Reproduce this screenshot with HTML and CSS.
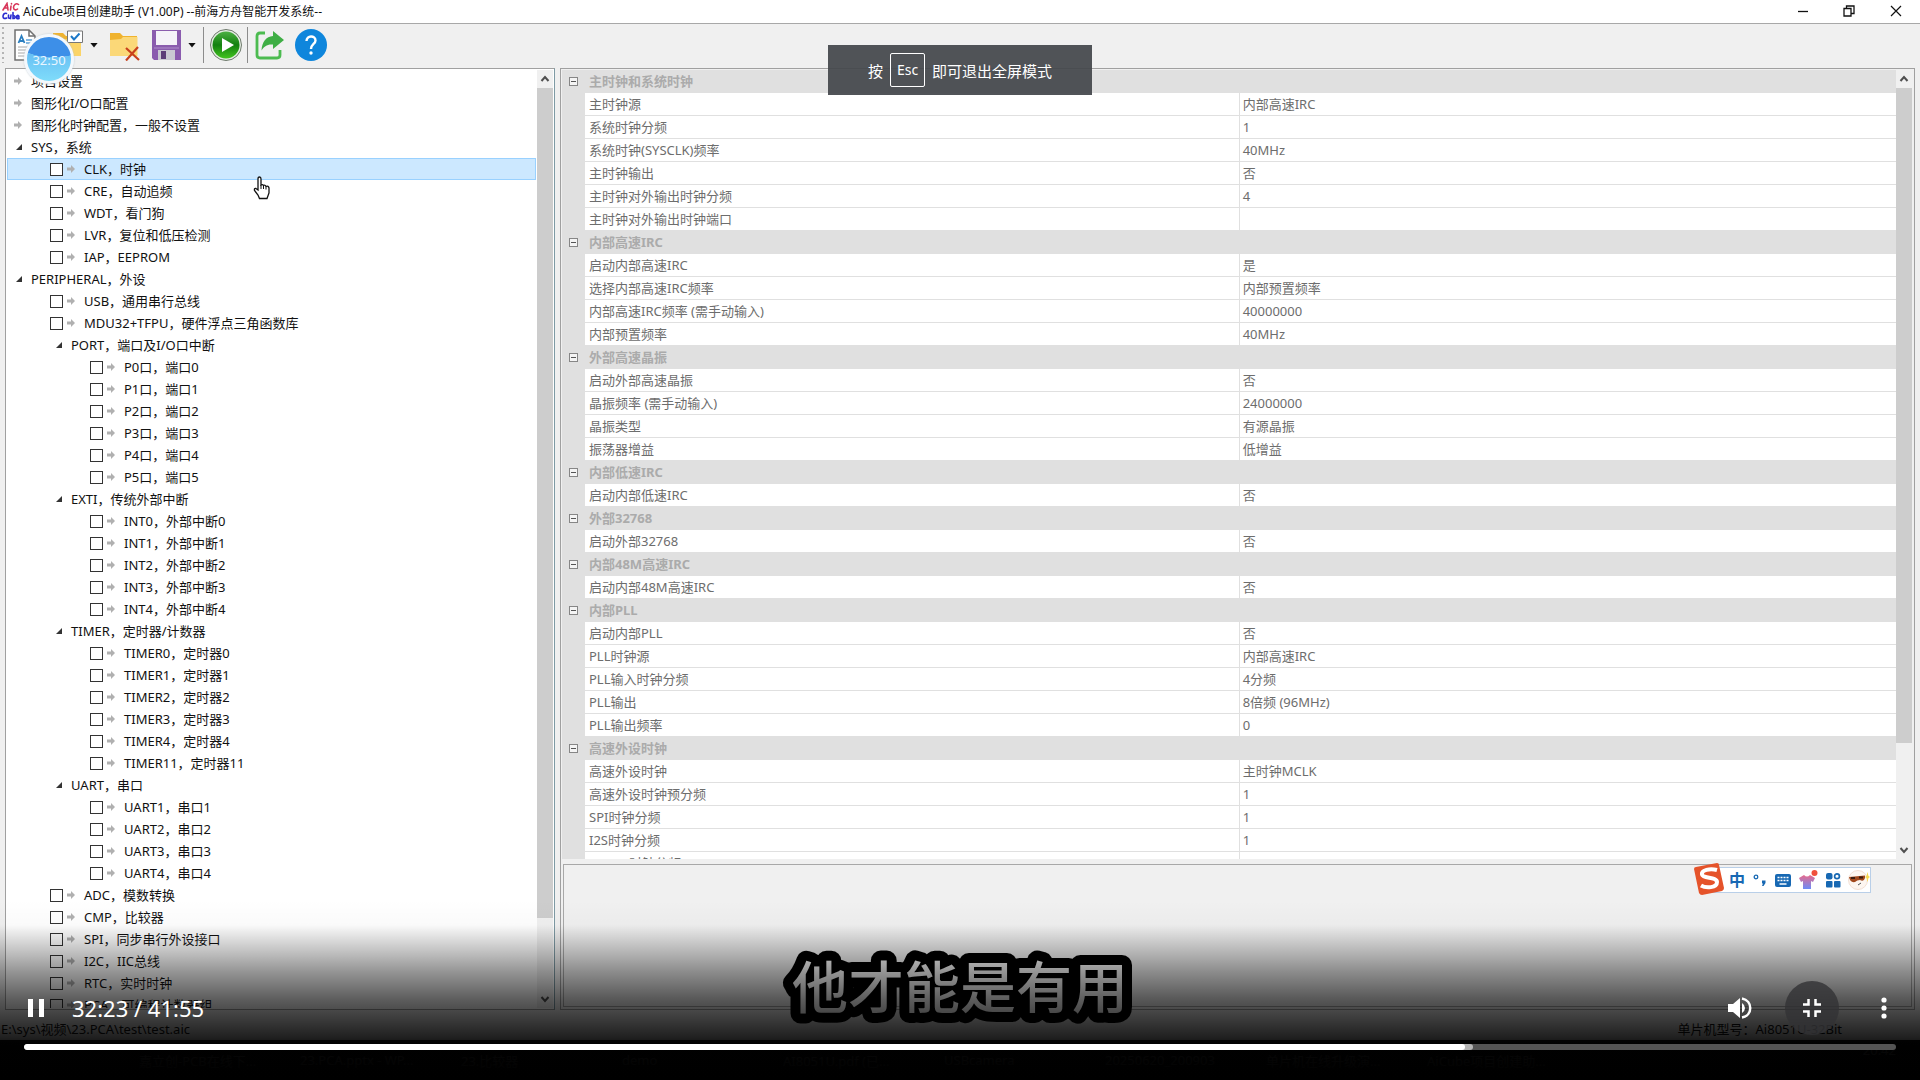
FILE: index.html
```html
<!DOCTYPE html>
<html lang="zh-CN">
<head>
  <meta charset="utf-8">
  <title>AiCube项目创建助手</title>
  <link rel="stylesheet" href="styles.css">
</head>
<body>
  <div class="titlebar">
    <svg class="app-icon" width="18" height="18" viewBox="0 0 18 18">
      <g fill="none" stroke-width="1.6" stroke-linecap="round">
        <path stroke="#d8365a" d="M1 8 5 1.5 6 8M2.600 6H6M9 4 8.500 8M9.500 1.500V2M16.500 2.500C14 .5 11.500 3 11.500 5.500S14 8.500 15.500 7"/>
        <path stroke="#2a2ad0" d="M4.500 11.500C2.500 10.500 1 12.500 1 14.500S3 17 4.500 16M6.500 13V16L8.500 16.500 9 13M11 10.500V16.500C13.500 17 14 13.500 11 13.500M14.500 15H17C17 12.500 14.500 13 14.500 15S15.500 17 17 16.500"/>
      </g>
    </svg>
    <span class="title">AiCube项目创建助手 (V1.00P) --前海方舟智能开发系统--</span>
    <div class="window-buttons">
      <button aria-label="最小化"><svg width="12" height="12" viewBox="0 0 12 12"><path d="M1 6.500H11" stroke="#111" stroke-width="1.300"/></svg></button>
      <button aria-label="还原"><svg width="12" height="12" viewBox="0 0 12 12"><path d="M1 3.500H8V11H1ZM3.500 3.500V1H11V8.500H8" fill="none" stroke="#111" stroke-width="1.300"/></svg></button>
      <button aria-label="关闭"><svg width="12" height="12" viewBox="0 0 12 12"><path d="M1 1 11 11M11 1 1 11" stroke="#111" stroke-width="1.200"/></svg></button>
    </div>
  </div>

  <div class="toolbar">
    <span class="grip"></span>
    <button class="tool" aria-label="新建">
      <svg width="32" height="32" viewBox="0 0 32 32">
        <path d="M4 1H18L24 7V31H4Z" fill="#fff" stroke="#707070" stroke-width="1.500"/>
        <path d="M18 1V7H24" fill="none" stroke="#707070" stroke-width="1.500"/>
        <path d="M7.500 14 10.500 7 13.500 14M8.500 12H12.500" fill="none" stroke="#2b7fc0" stroke-width="1.800"/>
        <path d="M15 11H21M15 14H21" stroke="#5aa0d8" stroke-width="1.300"/>
        <path d="M7 18H21M7 21H21M7 24H21M7 27H21" stroke="#a8a8a8"/>
      </svg>
    </button>
    <button class="tool" aria-label="打开">
      <svg width="32" height="32" viewBox="0 0 32 32">
        <path d="M1 4H11L14 7H28V27H1Z" fill="#f0b32e"/>
        <path d="M1 10H29V27H1Z" fill="#fbd467"/>
        <path d="M15.500 2H30.500V13.500H15.500Z" fill="#fff" stroke="#777"/>
        <path d="M19 7 22 10.500 27.500 4.500" fill="none" stroke="#1c78c8" stroke-width="2"/>
      </svg>
    </button>
    <span class="caret"></span>
    <button class="tool" aria-label="关闭项目">
      <svg width="32" height="32" viewBox="0 0 32 32">
        <path d="M1 4H11L14 7H28V27H1Z" fill="#f0b32e"/>
        <path d="M1 11 12 10 14 8H28.500V27H1Z" fill="#fbd878"/>
        <path d="M17 19 30 31M29 18 17 31.500" stroke="#c8401c" stroke-width="2.200"/>
      </svg>
    </button>
    <button class="tool" aria-label="保存">
      <svg width="32" height="32" viewBox="0 0 32 32">
        <path d="M2 1H31V31H4L2 29Z" fill="#8a5bae"/>
        <path d="M6 2H27V16H6Z" fill="#f4f1f8"/>
        <path d="M4 18H29V20H4Z" fill="#9d74bd"/>
        <path d="M8 21H25V31H8Z" fill="#c9c9d2"/>
        <path d="M11 22H16V30H11Z" fill="#5b3d78"/>
      </svg>
    </button>
    <span class="caret"></span>
    <span class="sep"></span>
    <button class="tool" aria-label="运行">
      <svg width="34" height="34" viewBox="0 0 34 34">
        <defs><linearGradient id="run" x1="0" y1="0" x2="0" y2="1"><stop offset="0" stop-color="#4cb043"/><stop offset=".5" stop-color="#12800f"/><stop offset="1" stop-color="#43c41f"/></linearGradient></defs>
        <circle cx="17" cy="17" r="15.500" fill="#e4ece2" stroke="#6f7a6d"/>
        <circle cx="17" cy="17" r="13.500" fill="url(#run)"/>
        <path d="M13 10 25 17 13 24Z" fill="#fff"/>
      </svg>
    </button>
    <span class="sep"></span>
    <button class="tool" aria-label="导出">
      <svg width="32" height="32" viewBox="0 0 32 32">
        <path d="M11 4H6Q3 4 3 7V26Q3 29 6 29H23Q26 29 26 26V21" fill="none" stroke="#4cbb50" stroke-width="2.800"/>
        <path d="M19 2 30 11 19 20V15.500C13 15 10 17.500 7.500 21.500 8 13 12 7.500 19 7Z" fill="#3fae45"/>
      </svg>
    </button>
    <button class="tool" aria-label="帮助">
      <svg width="32" height="32" viewBox="0 0 32 32">
        <circle cx="16" cy="16" r="16" fill="#0f86dc"/>
        <path d="M11.500 12C11.500 6 20.500 6 20.500 11.500 20.500 15 16 15 16 20" fill="none" stroke="#fff" stroke-width="2.400"/>
        <circle cx="16" cy="24" r="1.700" fill="#fff"/>
      </svg>
    </button>
  </div>

  <div class="workspace">
    <div class="panel tree-panel">
      <ul class="tree">
        <li class="leaf0"><i class="arrow"></i>项目设置</li>
        <li class="leaf0"><i class="arrow"></i>图形化I/O口配置</li>
        <li class="leaf0"><i class="arrow"></i>图形化时钟配置，一般不设置</li>
        <li class="group0"><i class="open"></i>SYS，系统</li>
        <li class="selected"><label class="leaf1"><input type="checkbox"><i class="arrow"></i>CLK，时钟</label></li>
        <li><label class="leaf1"><input type="checkbox"><i class="arrow"></i>CRE，自动追频</label></li>
        <li><label class="leaf1"><input type="checkbox"><i class="arrow"></i>WDT，看门狗</label></li>
        <li><label class="leaf1"><input type="checkbox"><i class="arrow"></i>LVR，复位和低压检测</label></li>
        <li><label class="leaf1"><input type="checkbox"><i class="arrow"></i>IAP，EEPROM</label></li>
        <li class="group0"><i class="open"></i>PERIPHERAL，外设</li>
        <li><label class="leaf1"><input type="checkbox"><i class="arrow"></i>USB，通用串行总线</label></li>
        <li><label class="leaf1"><input type="checkbox"><i class="arrow"></i>MDU32+TFPU，硬件浮点三角函数库</label></li>
        <li class="group1"><i class="open"></i>PORT，端口及I/O口中断</li>
        <li><label class="leaf2"><input type="checkbox"><i class="arrow"></i>P0口，端口0</label></li>
        <li><label class="leaf2"><input type="checkbox"><i class="arrow"></i>P1口，端口1</label></li>
        <li><label class="leaf2"><input type="checkbox"><i class="arrow"></i>P2口，端口2</label></li>
        <li><label class="leaf2"><input type="checkbox"><i class="arrow"></i>P3口，端口3</label></li>
        <li><label class="leaf2"><input type="checkbox"><i class="arrow"></i>P4口，端口4</label></li>
        <li><label class="leaf2"><input type="checkbox"><i class="arrow"></i>P5口，端口5</label></li>
        <li class="group1"><i class="open"></i>EXTI，传统外部中断</li>
        <li><label class="leaf2"><input type="checkbox"><i class="arrow"></i>INT0，外部中断0</label></li>
        <li><label class="leaf2"><input type="checkbox"><i class="arrow"></i>INT1，外部中断1</label></li>
        <li><label class="leaf2"><input type="checkbox"><i class="arrow"></i>INT2，外部中断2</label></li>
        <li><label class="leaf2"><input type="checkbox"><i class="arrow"></i>INT3，外部中断3</label></li>
        <li><label class="leaf2"><input type="checkbox"><i class="arrow"></i>INT4，外部中断4</label></li>
        <li class="group1"><i class="open"></i>TIMER，定时器/计数器</li>
        <li><label class="leaf2"><input type="checkbox"><i class="arrow"></i>TIMER0，定时器0</label></li>
        <li><label class="leaf2"><input type="checkbox"><i class="arrow"></i>TIMER1，定时器1</label></li>
        <li><label class="leaf2"><input type="checkbox"><i class="arrow"></i>TIMER2，定时器2</label></li>
        <li><label class="leaf2"><input type="checkbox"><i class="arrow"></i>TIMER3，定时器3</label></li>
        <li><label class="leaf2"><input type="checkbox"><i class="arrow"></i>TIMER4，定时器4</label></li>
        <li><label class="leaf2"><input type="checkbox"><i class="arrow"></i>TIMER11，定时器11</label></li>
        <li class="group1"><i class="open"></i>UART，串口</li>
        <li><label class="leaf2"><input type="checkbox"><i class="arrow"></i>UART1，串口1</label></li>
        <li><label class="leaf2"><input type="checkbox"><i class="arrow"></i>UART2，串口2</label></li>
        <li><label class="leaf2"><input type="checkbox"><i class="arrow"></i>UART3，串口3</label></li>
        <li><label class="leaf2"><input type="checkbox"><i class="arrow"></i>UART4，串口4</label></li>
        <li><label class="leaf1"><input type="checkbox"><i class="arrow"></i>ADC，模数转换</label></li>
        <li><label class="leaf1"><input type="checkbox"><i class="arrow"></i>CMP，比较器</label></li>
        <li><label class="leaf1"><input type="checkbox"><i class="arrow"></i>SPI，同步串行外设接口</label></li>
        <li><label class="leaf1"><input type="checkbox"><i class="arrow"></i>I2C，IIC总线</label></li>
        <li><label class="leaf1"><input type="checkbox"><i class="arrow"></i>RTC，实时时钟</label></li>
        <li><label class="leaf1"><input type="checkbox"><i class="arrow"></i>PCA，可编程计数器组</label></li>
      </ul>
      <div class="scrollbar">
        <svg width="16" height="18" viewBox="0 0 16 18"><path d="M4.500 11 8 7 11.500 11" fill="none" stroke="#505050" stroke-width="2"/></svg>
        <div class="track"><div class="thumb tree-thumb"></div></div>
        <svg width="16" height="18" viewBox="0 0 16 18"><path d="M4.500 7 8 11 11.500 7" fill="none" stroke="#505050" stroke-width="2"/></svg>
      </div>
    </div>

    <div class="panel prop-panel">
      <div class="prop-view">
        <div class="prop-scroll">
          <table class="props">
            <colgroup><col class="gutter"><col class="name"><col></colgroup>
            <tr class="cat"><td><i class="minus"></i></td><th colspan="2">主时钟和系统时钟</th></tr>
            <tr><td></td><td>主时钟源</td><td>内部高速IRC</td></tr>
            <tr><td></td><td>系统时钟分频</td><td>1</td></tr>
            <tr><td></td><td>系统时钟(SYSCLK)频率</td><td>40MHz</td></tr>
            <tr><td></td><td>主时钟输出</td><td>否</td></tr>
            <tr><td></td><td>主时钟对外输出时钟分频</td><td>4</td></tr>
            <tr><td></td><td>主时钟对外输出时钟端口</td><td></td></tr>
            <tr class="cat"><td><i class="minus"></i></td><th colspan="2">内部高速IRC</th></tr>
            <tr><td></td><td>启动内部高速IRC</td><td>是</td></tr>
            <tr><td></td><td>选择内部高速IRC频率</td><td>内部预置频率</td></tr>
            <tr><td></td><td>内部高速IRC频率 (需手动输入)</td><td>40000000</td></tr>
            <tr><td></td><td>内部预置频率</td><td>40MHz</td></tr>
            <tr class="cat"><td><i class="minus"></i></td><th colspan="2">外部高速晶振</th></tr>
            <tr><td></td><td>启动外部高速晶振</td><td>否</td></tr>
            <tr><td></td><td>晶振频率 (需手动输入)</td><td>24000000</td></tr>
            <tr><td></td><td>晶振类型</td><td>有源晶振</td></tr>
            <tr><td></td><td>振荡器增益</td><td>低增益</td></tr>
            <tr class="cat"><td><i class="minus"></i></td><th colspan="2">内部低速IRC</th></tr>
            <tr><td></td><td>启动内部低速IRC</td><td>否</td></tr>
            <tr class="cat"><td><i class="minus"></i></td><th colspan="2">外部32768</th></tr>
            <tr><td></td><td>启动外部32768</td><td>否</td></tr>
            <tr class="cat"><td><i class="minus"></i></td><th colspan="2">内部48M高速IRC</th></tr>
            <tr><td></td><td>启动内部48M高速IRC</td><td>否</td></tr>
            <tr class="cat"><td><i class="minus"></i></td><th colspan="2">内部PLL</th></tr>
            <tr><td></td><td>启动内部PLL</td><td>否</td></tr>
            <tr><td></td><td>PLL时钟源</td><td>内部高速IRC</td></tr>
            <tr><td></td><td>PLL输入时钟分频</td><td>4分频</td></tr>
            <tr><td></td><td>PLL输出</td><td>8倍频 (96MHz)</td></tr>
            <tr><td></td><td>PLL输出频率</td><td>0</td></tr>
            <tr class="cat"><td><i class="minus"></i></td><th colspan="2">高速外设时钟</th></tr>
            <tr><td></td><td>高速外设时钟</td><td>主时钟MCLK</td></tr>
            <tr><td></td><td>高速外设时钟预分频</td><td>1</td></tr>
            <tr><td></td><td>SPI时钟分频</td><td>1</td></tr>
            <tr><td></td><td>I2S时钟分频</td><td>1</td></tr>
            <tr><td></td><td>PWMA时钟分频</td><td>1</td></tr>
          </table>
        </div>
        <div class="scrollbar">
          <svg width="16" height="18" viewBox="0 0 16 18"><path d="M4.500 11 8 7 11.500 11" fill="none" stroke="#505050" stroke-width="2"/></svg>
          <div class="track"><div class="thumb prop-thumb"></div></div>
          <svg width="16" height="18" viewBox="0 0 16 18"><path d="M4.500 7 8 11 11.500 7" fill="none" stroke="#505050" stroke-width="2"/></svg>
        </div>
      </div>
      <div class="help-box"></div>
    </div>
  </div>

  <div class="statusbar">
    <span>E:\sys\视频\23.PCA\test\test.aic</span>
    <span class="model">单片机型号：Ai8051U-32Bit</span>
  </div>

  <div class="taskbar">
    <span>嘉立创-PCB在线下...</span>
    <span>23.PCA.pptx - WP...</span>
    <span>23.比较器</span>
    <span>demo</span>
    <span>AI8051U.pdf (已...</span>
    <span>USBcamera</span>
    <span>20250620_200903</span>
    <span>单片机在线升级演...</span>
    <span>AiCube项目创建助...</span>
    <span class="clock">20:42</span>
  </div>

  <!-- floating things on the desktop -->
  <div class="rec-ball">32:50</div>

  <svg class="cursor" width="18" height="24" viewBox="0 0 18 24">
    <path d="M5 14V3Q5 1 6.500 1T8 3V9Q9.500 8 10.500 9.500 12 8.500 13 10.500 15.500 9.500 16 12V17L14 22.500H6.500L5 19 1.500 14.500Q1 12 3 12.500Z" fill="#fff" stroke="#111" stroke-width="1.300"/>
    <path d="M8 9V13M10.500 9.500V13M13 10.500V13.500" stroke="#111"/>
  </svg>

  <div class="ime">
    <svg class="ime-logo" width="32" height="32" viewBox="0 0 32 32">
      <path d="M1 6Q1 4 3 4L24 0Q26 0 26 2L31 25Q31 27 29 28L9 32Q7 32 6 30Z" fill="#e5532a"/>
      <path d="M24 7C17 5 8 7 9 11.500 10 16 24 13.500 24 19 24 25 13 25.500 8 22.500" fill="none" stroke="#fff" stroke-width="4"/>
    </svg>
    <span class="ime-mode">中</span>
    <svg width="16" height="16" viewBox="0 0 16 16"><circle cx="4" cy="5" r="1.800" fill="none" stroke="#1768b3" stroke-width="1.300"/><path d="M10 8.500H13.500V11L11.500 14H10L11 11.500H10Z" fill="#1768b3"/></svg>
    <svg width="16" height="16" viewBox="0 0 16 16"><rect y="2" width="16" height="13" rx="2" fill="#1768b3"/><path d="M2.500 5.500H13.500M2.500 8.500H13.500" stroke="#fff" stroke-width="1.500" stroke-dasharray="2 1"/><path d="M4.500 12H11.500" stroke="#fff" stroke-width="1.500"/></svg>
    <svg width="20" height="20" viewBox="0 0 20 20"><defs><linearGradient id="shirt" x1="0" y1="0" x2="0" y2="1"><stop offset="0" stop-color="#e86a8c"/><stop offset="1" stop-color="#6c8cf8"/></linearGradient></defs><path d="M6 5Q9 8 12 5L17 8 15 12 13 11V19H5V11L3 12 1 8Z" fill="url(#shirt)"/><circle cx="16.500" cy="3" r="3" fill="#f0503c"/></svg>
    <svg width="16" height="16" viewBox="0 0 16 16"><g fill="#1768b3"><rect x="1" y="1" width="6.500" height="6.500" rx="2"/><rect x="1" y="9" width="6.500" height="6.500" rx="1"/><rect x="9" y="9" width="6.500" height="6.500" rx="1"/></g><circle cx="12" cy="4.300" r="2.400" fill="none" stroke="#1768b3" stroke-width="1.700"/></svg>
    <svg width="22" height="22" viewBox="0 0 22 22"><circle cx="10" cy="11" r="9.500" fill="#fdf6f0" stroke="#f3e0d4"/><path d="M1 8 17 6.500V9Q16 13 12 11 9 11 7 13 2 14 1 8Z" fill="#a2481c"/><path d="M3 9H7M11 8.500H15" stroke="#3b1c10" stroke-width="2"/><path d="M10 16 13 14" stroke="#555"/><path d="M19.500 3 20.500 7 22 8 20.500 9 19.500 13 18.500 9 17 8 18.500 7Z" fill="#f6d84c"/></svg>
  </div>

  <svg class="subtitle"><text x="50%" y="61">他才能是有用</text></svg>

  <div class="esc-hint">按<kbd>Esc</kbd>即可退出全屏模式</div>

  <div class="player">
    <div class="controls">
      <button class="pause" aria-label="暂停"><svg width="16" height="18" viewBox="0 0 16 18"><path d="M0 0H5V18H0ZM11 0H16V18H11Z" fill="#fff"/></svg></button>
      <span class="time">32:23 / 41:55</span>
      <button class="round" aria-label="静音"><svg width="24" height="24" viewBox="0 0 24 24"><path d="M0 8V16H5L12 22V2L5 8Z" fill="#fff"/><path d="M14 7Q17 9 17 12T14 17Z" fill="#fff"/><path d="M14 2.500C25 4.500 25 19.500 14 21.500" fill="none" stroke="#fff" stroke-width="2.500"/></svg></button>
      <button class="round active" aria-label="退出全屏"><svg width="18" height="18" viewBox="0 0 18 18"><path d="M0 5.500H5.500V0M12.500 0V5.500H18M0 12.500H5.500V18M12.500 18V12.500H18" fill="none" stroke="#fff" stroke-width="2.500"/></svg></button>
      <button class="round" aria-label="更多"><svg width="6" height="22" viewBox="0 0 6 22"><g fill="#fff"><circle cx="3" cy="3" r="2.600"/><circle cx="3" cy="11" r="2.600"/><circle cx="3" cy="19" r="2.600"/></g></svg></button>
    </div>
    <div class="timeline"><div class="buffered"></div><div class="played"></div></div>
  </div>
</body>
</html>
```
FILE: styles.css
```css
* {
  box-sizing: border-box;
}

body {
  margin: 0;
  height: 100vh;
  display: flex;
  flex-direction: column;
  overflow: hidden;
  position: relative;
  background: #f0f0f0;
  color: #111;
  font-family: "Noto Sans", "Noto Sans CJK SC", sans-serif;
  font-size: 13px;
}

button {
  border: none;
  background: none;
  padding: 0;
  display: flex;
  align-items: center;
  justify-content: center;
}

/* title bar */
.titlebar {
  height: 24px;
  flex: none;
  display: flex;
  align-items: center;
  gap: 3px;
  padding: 0 0 2px 2px;
  background: #fff;
  border-bottom: 1px solid #a8a8a8;
}

.title {
  font-size: 12px;
}

.window-buttons {
  margin-left: auto;
  display: flex;
}

.window-buttons button {
  width: 46px;
  height: 22px;
}

.window-buttons button:last-child {
  width: 48px;
}

/* toolbar */
.toolbar {
  height: 44px;
  flex: none;
  display: flex;
  align-items: center;
  padding: 0 0 2px 2px;
}

.grip {
  width: 2px;
  height: 36px;
  margin-right: 2px;
  background: repeating-linear-gradient(#b4b4b4 0 2px, transparent 2px 5px);
}

.tool {
  width: 41px;
  height: 36px;
}

.caret {
  width: 8px;
  height: 5px;
  margin: 0 6px 0 2px;
  background: #111;
  clip-path: polygon(0 0, 100% 0, 50% 100%);
}

.sep {
  width: 1px;
  height: 36px;
  margin: 0 1px;
  background: #8c8c8c;
}

/* main area */
.workspace {
  flex: 1;
  min-height: 0;
  display: flex;
  gap: 5px;
  padding: 0 5px;
}

.panel {
  border: 1px solid #a0a0a0;
  min-width: 0;
}

.tree-panel {
  width: 550px;
  flex: none;
  display: flex;
  padding: 1px;
  background: #fff;
  border-right-color: #7e9aa4;
  overflow: hidden;
}

.tree {
  flex: 1;
  margin: 0;
  padding: 0 1px 0 0;
  list-style: none;
  line-height: 22px;
  overflow: hidden;
}

.tree li {
  height: 22px;
  display: flex;
  align-items: center;
  white-space: nowrap;
}

.tree label {
  flex: 1;
  display: flex;
  align-items: center;
}

.tree .leaf0 { padding-left: 7px; }
.tree .leaf1 { padding-left: 43px; }
.tree .leaf2 { padding-left: 83px; }
.tree .group0 { padding-left: 9px; }
.tree .group1 { padding-left: 49px; }

.tree .selected {
  background: #cce8ff;
  box-shadow: inset 0 0 0 1px #99d1ff;
}

.tree input {
  appearance: none;
  width: 13px;
  height: 13px;
  margin: 0 4px 0 0;
  border: 1px solid #333;
  background: #fff;
}

.arrow {
  width: 8px;
  height: 8px;
  margin-right: 9px;
  background: #b0b0b0;
  clip-path: polygon(0 30%, 50% 30%, 50% 0, 100% 50%, 50% 100%, 50% 70%, 0 70%);
}

.open {
  width: 6px;
  height: 6px;
  margin-right: 9px;
  background: #333;
  clip-path: polygon(100% 0, 100% 100%, 0 100%);
}

.scrollbar {
  width: 16px;
  flex: none;
  display: flex;
  flex-direction: column;
  background: #f0f0f0;
}

.track {
  flex: 1;
}

.thumb {
  background: #cdcdcd;
}

.tree-thumb { height: 92%; }
.prop-thumb { height: 87%; }

/* property grid */
.prop-panel {
  flex: 1;
  display: flex;
  flex-direction: column;
  padding: 1px 2px 2px 1px;
}

.prop-view {
  flex: 1;
  min-height: 0;
  display: flex;
}

.prop-scroll {
  flex: 1;
  overflow: hidden;
}

.props {
  width: 100%;
  table-layout: fixed;
  border-collapse: separate;
  border-spacing: 0;
  background: #fff;
  color: #6d6d6d;
}

.props .gutter { width: 23px; }
.props .name { width: 49%; }

.props td,
.props th {
  height: 23px;
  padding: 0 4px;
  line-height: 22px;
  text-align: left;
  white-space: nowrap;
  border-bottom: 1px solid #e0e0e0;
}

.props td:first-child {
  padding: 0 7px;
  background: #e0e0e0;
}

.props td:last-child {
  padding: 0 3px;
  border-left: 1px solid #e0e0e0;
}

.props th {
  background: #e0e0e0;
  color: #ababab;
}

.minus {
  display: block;
  width: 9px;
  height: 9px;
  border: 1px solid #868686;
  background: linear-gradient(#555, #555) center / 5px 1px no-repeat #f4f4f4;
}

.help-box {
  height: 143px;
  flex: none;
  margin: 5px 0 0 1px;
  border: 1px solid #a8a8a8;
}

.statusbar {
  height: 30px;
  flex: none;
  display: flex;
  align-items: center;
  justify-content: space-between;
  padding: 6px 78px 0 1px;
}

.taskbar {
  height: 40px;
  flex: none;
  display: flex;
  align-items: center;
  padding-left: 139px;
  background: #101010;
  color: #ddd;
}

.taskbar span {
  width: 161px;
}

.taskbar .clock {
  width: auto;
  margin-left: auto;
  padding: 0 24px 20px 0;
}

/* overlays */
.rec-ball {
  position: absolute;
  left: 24px;
  top: 34px;
  width: 50px;
  height: 50px;
  border: 3px solid #f4f8fc;
  border-radius: 50%;
  background: radial-gradient(ellipse 36px 16px at 60% 10%, #3d8fe8 98%, transparent), linear-gradient(#5aaef0, #7fdcfa);
  color: #eaf6ff;
  font-size: 13px;
  line-height: 46px;
  text-align: center;
  box-shadow: 0 0 2px #b8c4cc;
}

.cursor {
  position: absolute;
  left: 253px;
  top: 176px;
}

.ime {
  position: absolute;
  right: 49px;
  top: 867px;
  height: 26px;
  display: flex;
  align-items: center;
  gap: 7px;
  padding: 0 0 0 25px;
  background: #fff;
  border: 1px solid #b9cfe8;
}

.ime-logo {
  position: absolute;
  left: -11px;
  top: -5px;
}

.ime-mode {
  color: #1768b3;
  font-size: 16px;
  font-weight: bold;
  line-height: 24px;
}

.esc-hint {
  position: absolute;
  left: 50%;
  top: 45px;
  width: 264px;
  height: 50px;
  margin-left: -132px;
  display: flex;
  align-items: center;
  justify-content: center;
  gap: 7px;
  background: rgba(66, 69, 74, 0.92);
  color: #fff;
  font-size: 15px;
}

.esc-hint kbd {
  width: 35px;
  height: 34px;
  border: 1px solid #fff;
  border-radius: 2px;
  font-family: inherit;
  font-size: 14px;
  line-height: 32px;
  text-align: center;
}

.subtitle {
  position: absolute;
  left: 0;
  bottom: 53px;
  width: 100%;
  height: 80px;
  fill: #fff;
  stroke: #000;
  stroke-width: 20px;
  stroke-linejoin: round;
  paint-order: stroke;
  font-size: 56px;
  font-weight: 500;
  text-anchor: middle;
}

.player {
  position: absolute;
  left: 0;
  right: 0;
  bottom: 0;
  height: 180px;
  display: flex;
  flex-direction: column;
  justify-content: flex-end;
  padding: 0 24px 30px;
  background: linear-gradient(transparent, rgba(0, 0, 0, 0.02) 25px, rgba(0, 0, 0, 0.27) 55px, rgba(0, 0, 0, 0.42) 72px, rgba(0, 0, 0, 0.64) 100px, rgba(0, 0, 0, 0.87) 138px, rgba(0, 0, 0, 0.97) 150px, #000);
}

.controls {
  height: 54px;
  margin-bottom: 9px;
  display: flex;
  align-items: center;
  gap: 18px;
}

.pause {
  margin: 0 10px 0 4px;
}

.time {
  flex: 1;
  color: #fff;
  font-size: 22px;
}

.round {
  width: 54px;
  height: 54px;
  border-radius: 50%;
}

.round:last-child {
  margin-right: -15px;
}

.active {
  background: rgba(50, 50, 52, 0.8);
}

.timeline {
  position: relative;
  height: 6px;
  border-radius: 3px;
  background: #545454;
  overflow: hidden;
}

.played,
.buffered {
  position: absolute;
  left: 0;
  top: 0;
  height: 6px;
  border-radius: 3px;
}

.buffered {
  width: 77.4%;
  background: #b4b4b4;
}

.played {
  width: 77%;
  background: #fff;
}
```
